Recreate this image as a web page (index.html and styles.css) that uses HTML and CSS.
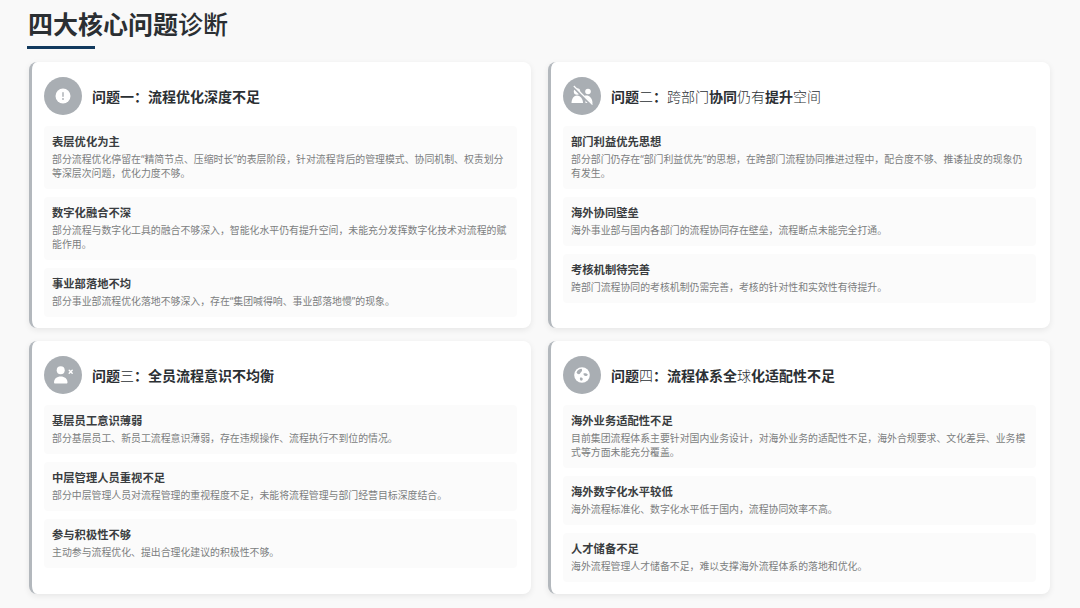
FILE: index.html
```html
<!DOCTYPE html>
<html lang="zh-CN">
<head>
<meta charset="utf-8">
<title>四大核心问题诊断</title>
<link rel="stylesheet" href="styles.css">
</head>
<body>
<header class="page-head">
  <h1 class="page-title">四大核心问题<span class="thin-title">诊断</span></h1>
  <div class="page-rule"></div>
</header>
<main class="grid">
  <section class="card">
    <div class="card-head">
      <span class="badge"><svg viewBox="0 0 38 38" width="38" height="38"><circle cx="19" cy="19" r="7.500" fill="#fff"/><rect x="18.300" y="15" width="1.400" height="5" rx=".7" fill="#a9aeb3"/><circle cx="19" cy="22" r=".9" fill="#a9aeb3"/></svg></span>
      <h2 class="card-title">问题一：流程优化深度不足</h2>
    </div>
    <div class="items">
      <div class="item"><h3>表层优化为主</h3><p>部分流程优化停留在“精简节点、压缩时长”的表层阶段，针对流程背后的管理模式、协同机制、权责划分等深层次问题，优化力度不够。</p></div>
      <div class="item"><h3>数字化融合不深</h3><p>部分流程与数字化工具的融合不够深入，智能化水平仍有提升空间，未能充分发挥数字化技术对流程的赋能作用。</p></div>
      <div class="item"><h3>事业部落地不均</h3><p>部分事业部流程优化落地不够深入，存在“集团喊得响、事业部落地慢”的现象。</p></div>
    </div>
  </section>
  <section class="card">
    <div class="card-head">
      <span class="badge"><svg viewBox="0 0 38 38" width="38" height="38"><g fill="#fff"><circle cx="14" cy="14.500" r="3.200"/><circle cx="25" cy="14.500" r="2.800"/><path d="M8.500 26c0-4.500 2.500-7.500 5.500-7.500s6 3 6 7.500z"/><path d="M21.500 18.800c3.500-1.200 8 1.200 8 7.200h-7c0-3-.2-5.200-1-7.200z"/></g><path d="M10 9.500 29 28.500" stroke="#a9aeb3" stroke-width="2.600"/><path d="M10.800 9 29.500 27.500" stroke="#fff" stroke-width="1.200"/></svg></span>
      <h2 class="card-title">问题<span class="thin">二</span>：<span class="thin">跨部门</span>协同<span class="thin">仍有</span>提升<span class="thin">空间</span></h2>
    </div>
    <div class="items">
      <div class="item"><h3>部门利益优先思想</h3><p>部分部门仍存在“部门利益优先”的思想，在跨部门流程协同推进过程中，配合度不够、推诿扯皮的现象仍有发生。</p></div>
      <div class="item"><h3>海外协同壁垒</h3><p>海外事业部与国内各部门的流程协同存在壁垒，流程断点未能完全打通。</p></div>
      <div class="item"><h3>考核机制待完善</h3><p>跨部门流程协同的考核机制仍需完善，考核的针对性和实效性有待提升。</p></div>
    </div>
  </section>
  <section class="card">
    <div class="card-head">
      <span class="badge"><svg viewBox="0 0 38 38" width="38" height="38"><g fill="#fff"><circle cx="16.700" cy="14.300" r="4"/><path d="M10 26.500c0-3.800 2.800-6 6.700-6s6.800 2.200 6.800 6c0 .5-.5 1-1 1H11c-.5 0-1-.5-1-1z"/></g><path d="M25.200 14.200l3 3m0-3-3 3" stroke="#fff" stroke-width="1.400" stroke-linecap="round"/></svg></span>
      <h2 class="card-title">问题<span class="thin">三</span>：全员流程意识不均衡</h2>
    </div>
    <div class="items">
      <div class="item"><h3>基层员工意识薄弱</h3><p>部分基层员工、新员工流程意识薄弱，存在违规操作、流程执行不到位的情况。</p></div>
      <div class="item"><h3>中层管理人员重视不足</h3><p>部分中层管理人员对流程管理的重视程度不足，未能将流程管理与部门经营目标深度结合。</p></div>
      <div class="item"><h3>参与积极性不够</h3><p>主动参与流程优化、提出合理化建议的积极性不够。</p></div>
    </div>
  </section>
  <section class="card">
    <div class="card-head">
      <span class="badge"><svg viewBox="0 0 38 38" width="38" height="38"><circle cx="19" cy="19" r="7.800" fill="#fff"/><g fill="#a9aeb3"><path d="M13.500 16.500c1-2.500 3-3.700 5-3.700 1 1 .6 2.400-.3 3.200-.8.600-1 2.200-2.400 2.200-1 0-1.900-.9-2.300-1.700z"/><path d="M20.500 17.500c1.300-.6 3.200-.2 4.300 1-.3 1-1.300 1.500-2.300 1.500s-2.300-1.300-2-2.500z"/><path d="M17 21.800c1-.5 2.300 0 2.800.9 0 1-.9 2-1.800 2s-1.400-1.900-1-2.900z"/></g></svg></span>
      <h2 class="card-title">问题<span class="thin">四</span>：流程体系全<span class="thin">球</span>化适配性不足</h2>
    </div>
    <div class="items">
      <div class="item"><h3>海外业务适配性不足</h3><p>目前集团流程体系主要针对国内业务设计，对海外业务的适配性不足，海外合规要求、文化差异、业务模式等方面未能充分覆盖。</p></div>
      <div class="item"><h3>海外数字化水平较低</h3><p>海外流程标准化、数字化水平低于国内，流程协同效率不高。</p></div>
      <div class="item"><h3>人才储备不足</h3><p>海外流程管理人才储备不足，难以支撑海外流程体系的落地和优化。</p></div>
    </div>
  </section>
</main>
</body>
</html>
```
FILE: styles.css
```css
* { box-sizing: border-box; }
html, body { margin: 0; height: 100%; }
body {
  width: 1080px;
  height: 608px;
  overflow: hidden;
  background: #f9f9f9;
  padding: 7.500px 30px 0 29px;
  font-family: "Noto Sans", "Noto Sans CJK SC", sans-serif;
  color: #333;
}
.page-head { margin-left: -2px; height: 54.500px; }
.page-title {
  margin: 0;
  padding-left: 1px;
  font-size: 25px;
  line-height: 32px;
  font-weight: 700;
  color: #2b2f33;
}
.thin-title { font-weight: 500; }
.page-rule {
  width: 68px;
  height: 3px;
  margin-top: 6.500px;
  background: #123a5e;
}
.grid {
  display: grid;
  grid-template-columns: 502px 502px;
  grid-template-rows: 266px 253px;
  column-gap: 17px;
  row-gap: 13px;
}
.card {
  background: #fff;
  border-left: 3px solid #b3b8bd;
  border-radius: 8px;
  padding: 14.500px 14px 11px 12px;
  box-shadow: 0 2px 6px rgba(0, 0, 0, .08);
}
.card-head {
  display: flex;
  align-items: center;
  gap: 10px;
  height: 38px;
  margin-bottom: 11.500px;
}
.badge {
  flex: none;
  width: 38px;
  height: 38px;
  border-radius: 50%;
  background: #a9aeb3;
  display: block;
}
.badge svg { display: block; }
.card-title {
  margin: 0;
  padding-top: 2px;
  font-size: 14px;
  line-height: 20px;
  font-weight: 700;
  color: #2b2f33;
}
.thin { font-weight: 300; }
.items { display: flex; flex-direction: column; gap: 8px; }
.item {
  background: #fbfbfb;
  border-radius: 4px;
  padding: 9px 8px 9px 8px;
}
.item h3 {
  margin: 0 0 3px;
  font-size: 11.300px;
  line-height: 14px;
  font-weight: 700;
  color: #3a3d40;
}
.item p {
  margin: 0;
  font-size: 9.900px;
  line-height: 14px;
  color: #7c7e80;
}
```
